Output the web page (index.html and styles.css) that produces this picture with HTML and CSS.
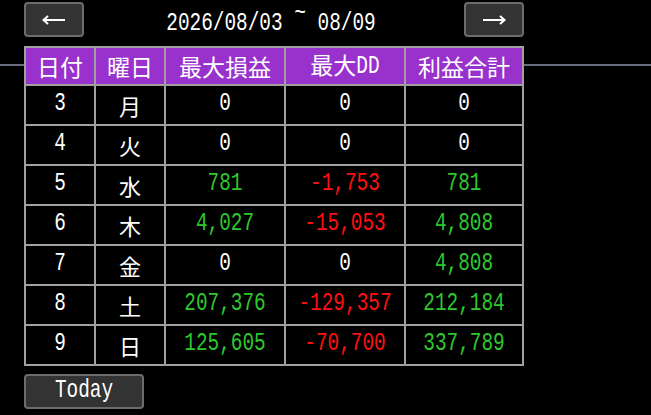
FILE: index.html
```html
<!DOCTYPE html>
<html lang="ja">
<head>
<meta charset="utf-8">
<title>Weekly</title>
<link rel="stylesheet" href="styles.css">
</head>
<body>
<div class="screen">
  <div class="nav">
    <button class="btn arrow" aria-label="prev">
      <svg width="24" height="10" viewBox="0 0 24 10"><path d="M1.5 5H23M6 1L1.5 5L6 9" fill="none" stroke="#fff" stroke-width="2"/></svg>
    </button>
    <div class="date"><span class="n">2026/08/03 <span class="tilde">~</span> 08/09</span></div>
    <button class="btn arrow" aria-label="next">
      <svg width="24" height="10" viewBox="0 0 24 10"><path d="M1 5H22.5M18 1L22.5 5L18 9" fill="none" stroke="#fff" stroke-width="2"/></svg>
    </button>
  </div>
  <div class="board">
    <div class="rule left"></div>
    <div class="grid">
      <div class="c h">日付</div><div class="c h">曜日</div><div class="c h">最大損益</div><div class="c h"><span class="lbl">最大<span class="n dd">DD</span></span></div><div class="c h">利益合計</div>

      <div class="c"><span class="n">3</span></div><div class="c j">月</div><div class="c"><span class="n">0</span></div><div class="c"><span class="n">0</span></div><div class="c"><span class="n">0</span></div>
      <div class="c"><span class="n">4</span></div><div class="c j">火</div><div class="c"><span class="n">0</span></div><div class="c"><span class="n">0</span></div><div class="c"><span class="n">0</span></div>
      <div class="c"><span class="n">5</span></div><div class="c j">水</div><div class="c g"><span class="n">781</span></div><div class="c r"><span class="n">-1,753</span></div><div class="c g"><span class="n">781</span></div>
      <div class="c"><span class="n">6</span></div><div class="c j">木</div><div class="c g"><span class="n">4,027</span></div><div class="c r"><span class="n">-15,053</span></div><div class="c g"><span class="n">4,808</span></div>
      <div class="c"><span class="n">7</span></div><div class="c j">金</div><div class="c"><span class="n">0</span></div><div class="c"><span class="n">0</span></div><div class="c g"><span class="n">4,808</span></div>
      <div class="c"><span class="n">8</span></div><div class="c j">土</div><div class="c g"><span class="n">207,376</span></div><div class="c r"><span class="n">-129,357</span></div><div class="c g"><span class="n">212,184</span></div>
      <div class="c"><span class="n">9</span></div><div class="c j">日</div><div class="c g"><span class="n">125,605</span></div><div class="c r"><span class="n">-70,700</span></div><div class="c g"><span class="n">337,789</span></div>
    </div>
    <div class="rule right"></div>
  </div>
  <button class="btn today"><span class="n">Today</span></button>
</div>
</body>
</html>
```
FILE: styles.css
```css
* { box-sizing: border-box; }
html, body { margin: 0; padding: 0; background: #000; }
body { width: 651px; height: 415px; overflow: hidden; color: #fff; font-family: "Liberation Mono", "Noto Sans CJK JP", monospace; }

.screen { display: flex; flex-direction: column; align-items: flex-start; }

.n {
  display: inline-block;
  font-family: "Liberation Mono", monospace;
  font-size: 19.4px;
  line-height: 1;
  transform: scaleY(1.3);
  white-space: pre;
}
.tilde { display: inline-block; vertical-align: 8px; }

.nav {
  display: flex;
  align-items: flex-start;
  padding: 2px 0 0 24px;
  height: 46px;
}
.btn {
  margin: 0;
  padding: 0;
  background: #333;
  border: 2px solid #6c6c6c;
  border-radius: 4px;
  color: #fff;
  display: flex;
  align-items: center;
  justify-content: center;
  font: inherit;
}
.arrow { width: 60px; height: 35px; flex: none; }
.arrow svg { display: block; }
.date {
  width: 380px;
  height: 35px;
  padding-right: 6px;
  display: flex;
  align-items: center;
  justify-content: center;
}

.board { display: flex; align-items: flex-start; width: 651px; }
.rule { height: 2px; margin-top: 18px; background: #687080; }
.rule.left { width: 24px; }
.rule.right { flex: 1; }

.grid {
  display: grid;
  grid-template-columns: 68px 68px 118px 118px 116px;
  grid-template-rows: 36px repeat(7, 38px);
  gap: 2px;
  padding: 2px;
  background: #a0a0a0;
}
.c {
  background: #000;
  display: flex;
  align-items: center;
  justify-content: center;
  color: #fff;
}
.c.h {
  background: #9932cc;
  font-family: "Noto Sans CJK JP", sans-serif;
  font-size: 23px;
  line-height: 1;
}
.lbl { display: block; white-space: nowrap; }
.n.dd { transform-origin: 50% 82%; }
.c.j {
  font-family: "Noto Sans CJK JP", sans-serif;
  font-size: 22px;
  line-height: 1;
}
.c.g { color: #2ec82e; }
.c.r { color: #ff1010; }

.today {
  margin: 8px 0 0 24px;
  width: 120px;
  height: 35px;
}
```
